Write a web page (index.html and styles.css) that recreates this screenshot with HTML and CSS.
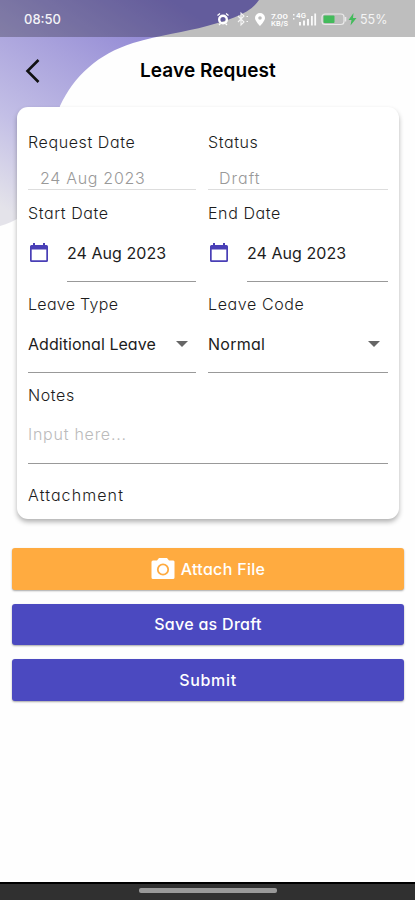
FILE: index.html
```html
<!DOCTYPE html>
<html lang="en">
<head>
<meta charset="utf-8">
<title>Leave Request</title>
<link rel="stylesheet" href="styles.css">
</head>
<body>
<div class="screen">
  <svg class="backdrop" width="415" height="240" viewBox="0 0 415 240" aria-hidden="true">
    <defs>
      <linearGradient id="wave" gradientUnits="userSpaceOnUse" x1="170" y1="0" x2="30" y2="225">
        <stop offset="0" stop-color="#857bd0"/>
        <stop offset=".38" stop-color="#a8a1dc"/>
        <stop offset=".7" stop-color="#c3bfe6"/>
        <stop offset="1" stop-color="#e4e3ea"/>
      </linearGradient>
    </defs>
    <path fill="url(#wave)" d="M0 0H259C250 14 228 20 207 26C185 32 160 35 133 43C98 54 74 76 60 106L40 200C30 212 15 222 0 226Z"/>
  </svg>
  <header class="status">
    <span class="time">08:50</span>
    <div class="indicators">
      <svg width="145" height="18" viewBox="0 0 145 18" aria-hidden="true">
        <g fill="none" stroke="#fff">
          <circle cx="8" cy="9.500" r="3.800" stroke-width="2.400"/>
          <path d="M2.500 5.500l2.500-2M13.500 5.500l-2.500-2M4 15l1.500-1.500M12 15l-1.500-1.500" stroke-width="1.300"/>
          <path d="M23 6l6 6-3 3V3l3 3-6 6M31.500 6.500h1.500M31.500 11.500h1.500" stroke-width="1.100" opacity=".85"/>
        </g>
        <path fill="#fff" fill-rule="evenodd" d="M45 3a5 5 0 0 0-5 5c0 3 5 8 5 8s5-5 5-8a5 5 0 0 0-5-5zm0 3.200a1.800 1.800 0 1 1 0 3.600 1.800 1.800 0 0 1 0-3.600z"/>
        <g class="tiny">
          <text x="56" y="8.500" textLength="17" lengthAdjust="spacingAndGlyphs">7.00</text>
          <text x="56" y="15.500" textLength="17" lengthAdjust="spacingAndGlyphs">KB/S</text>
          <text x="81" y="8" textLength="10" lengthAdjust="spacingAndGlyphs">4G</text>
        </g>
        <path fill="#fff" d="M78 4h1.500v1.500h-1.500zM78 8h1.500v1.500h-1.500zM84 12h2v3.500h-2zM88 10.500h2v5h-2zM92 9h2v6.500h-2zM96 6h1.800v9.500h-1.800zM99.300 3.500h1.800v12h-1.800z" opacity=".9"/>
        <rect x="107" y="4" width="22" height="10.500" rx="3" fill="none" stroke="#e9e9e9" stroke-width="1.200"/>
        <path d="M130.500 7v4.500" stroke="#e9e9e9" stroke-width="1.500"/>
        <rect x="108.500" y="5.500" width="11" height="7.500" rx="1" fill="#43bb5b"/>
        <path fill="#43bb5b" d="M138.500 3l-5 7h3l-1 5.500 6-7.500h-3.500z"/>
      </svg>
      <span class="percent">55%</span>
    </div>
  </header>
  <nav class="bar">
    <svg class="back" width="20" height="28" viewBox="0 0 20 28" role="img" aria-label="Back">
      <path d="M15.500 3L4.500 14l11 11" fill="none" stroke="#111" stroke-width="2.600"/>
    </svg>
    <h1>Leave Request</h1>
  </nav>
  <main>
    <section class="card">
      <div class="row first">
        <div class="field"><label>Request Date</label><div class="value muted">24 Aug 2023</div></div>
        <div class="field"><label>Status</label><div class="value muted status-value">Draft</div></div>
      </div>
      <div class="row">
        <div class="field"><label>Start Date</label>
          <div class="date">
            <svg class="cal" width="20" height="22" viewBox="0 0 20 22"><path fill="#493fb6" fill-rule="evenodd" d="M4 1h2v2h8V1h2v2h1.500A1.500 1.500 0 0 1 19 4.500v14a1.500 1.500 0 0 1-1.500 1.500h-15A1.500 1.500 0 0 1 1 18.500v-14A1.500 1.500 0 0 1 2.500 3H4zM2.700 7.500v10.800h14.600V7.500z"/></svg>
            <div class="value">24 Aug 2023</div>
          </div>
        </div>
        <div class="field"><label>End Date</label>
          <div class="date">
            <svg class="cal" width="20" height="22" viewBox="0 0 20 22"><path fill="#493fb6" fill-rule="evenodd" d="M4 1h2v2h8V1h2v2h1.500A1.500 1.500 0 0 1 19 4.500v14a1.500 1.500 0 0 1-1.500 1.500h-15A1.500 1.500 0 0 1 1 18.500v-14A1.500 1.500 0 0 1 2.500 3H4zM2.700 7.500v10.800h14.600V7.500z"/></svg>
            <div class="value">24 Aug 2023</div>
          </div>
        </div>
      </div>
      <div class="row">
        <div class="field"><label class="type">Leave Type</label><div class="value select"><span>Additional Leave</span><i class="caret"></i></div></div>
        <div class="field"><label>Leave Code</label><div class="value select"><span class="code">Normal</span><i class="caret"></i></div></div>
      </div>
      <div class="field notes"><label>Notes</label><div class="value hint">Input here...</div></div>
      <label class="attachment">Attachment</label>
    </section>
    <div class="actions">
      <button class="attach">
        <svg width="24" height="22" viewBox="0 0 24 22"><path fill="#fff" d="M8 0h8l2 2.500h3.500A1.500 1.500 0 0 1 23.500 4v15.500a1.500 1.500 0 0 1-1.500 1.500H2A1.500 1.500 0 0 1 .5 19.500V4A1.500 1.500 0 0 1 2 2.500h4z"/><circle cx="12" cy="11.500" r="5.200" fill="none" stroke="#ffab40" stroke-width="1.800"/></svg>
        <span>Attach File</span>
      </button>
      <button class="save">Save as Draft</button>
      <button class="submit">Submit</button>
    </div>
  </main>
  <footer class="system"><i class="handle"></i></footer>
</div>
</body>
</html>
```
FILE: styles.css
```css
* { box-sizing: border-box; }
body { margin: 0; background: #fff; font-family: Inter, "Noto Sans", sans-serif; }
.screen { position: relative; width: 415px; height: 900px; display: flex; flex-direction: column; overflow: hidden; background: #fefefe; }
.backdrop { position: absolute; top: 0; left: 0; }
.status { position: relative; height: 37px; flex: none; display: flex; justify-content: space-between; padding: 10px 0 0 24px; background: rgba(0, 0, 0, .25); color: #fff; }
.time { font-size: 13px; line-height: 19px; font-weight: 500; opacity: .92; }
.indicators { display: flex; width: 200px; }
.indicators svg { flex: none; }
.tiny { fill: #fff; font-size: 6.500px; font-weight: 600; }
.percent { font-size: 12.500px; line-height: 19px; opacity: .85; }
.bar { position: relative; height: 70px; flex: none; display: flex; align-items: center; padding: 0 139px 3px 23px; }
.back { flex: none; margin-right: 97px; }
h1 { margin: 0; font-size: 19px; line-height: 24px; font-weight: 600; letter-spacing: .08px; white-space: nowrap; color: #000; }
main { position: relative; flex: 1; }
.card { margin: 0 16px 0 17px; height: 412px; padding: 23px 11px 0; border-radius: 11px; background: #fff; box-shadow: 0 3px 5px rgba(0, 0, 0, .3); font-feature-settings: "cv11"; color: #1c1c1c; }
.row { display: grid; grid-template-columns: 168px 180px; gap: 12px; height: 91px; }
.row.first { height: 71px; }
label { display: block; height: 24px; font-size: 16px; line-height: 24px; font-weight: 300; letter-spacing: .6px; white-space: nowrap; }
.type { letter-spacing: .3px; }
.attachment { letter-spacing: 1.100px; }
.value { height: 56.500px; padding-top: 16px; font-size: 16px; line-height: 24px; letter-spacing: .05px; border-bottom: 1px solid #999; white-space: nowrap; }
.value.muted { height: 36px; padding: 12px 0 0 12px; border-color: #ddd; color: #999; font-weight: 300; letter-spacing: .7px; }
.value.status-value { padding-left: 11px; letter-spacing: 1px; }
.date { display: flex; gap: 18px; }
.date .value { flex: 1; }
.cal { flex: none; margin: 17px 0 0 1px; }
.field { min-width: 0; }
.select { display: flex; justify-content: space-between; }
.code { letter-spacing: .25px; }
.caret { width: 0; height: 0; margin: 9px 8px 0 0; border: 6px solid transparent; border-top-color: #666; border-bottom: 0; }
.notes { height: 100px; }
.value.hint { padding-top: 15px; color: #bbb; font-weight: 300; letter-spacing: .75px; }
.actions { display: flex; flex-direction: column; gap: 14px; margin: 29px 11px 0 12px; }
button { height: 41.500px; border: 0; border-radius: 3px; padding: 0; display: flex; align-items: center; justify-content: center; gap: 6px; background: #4b49c0; color: #fff; font: 500 16px/24px Inter, sans-serif; font-feature-settings: "cv11"; letter-spacing: .3px; box-shadow: 0 1px 2px rgba(0, 0, 0, .35); }
.attach { background: #ffab40; }
.submit { letter-spacing: .7px; }
.system { position: relative; height: 18px; flex: none; display: flex; justify-content: center; background: #303030; border-top: 2px solid #000; }
.handle { width: 138px; height: 5px; margin-top: 4px; border-radius: 2px; background: #999; }
```
